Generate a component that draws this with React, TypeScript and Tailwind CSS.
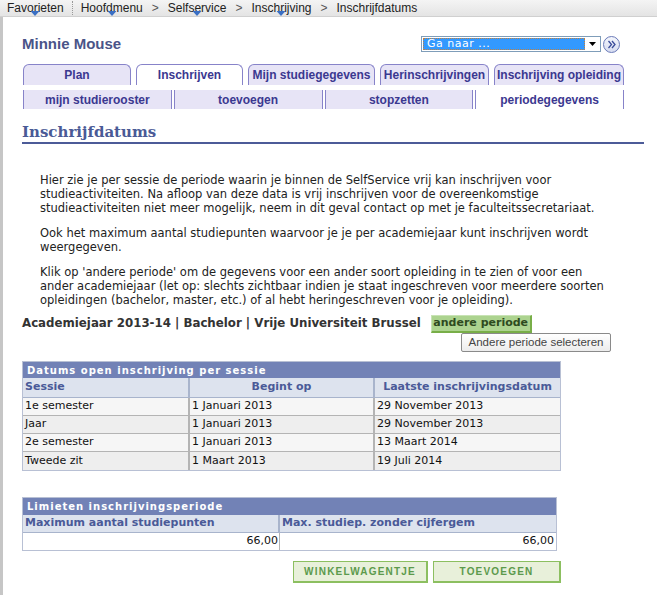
const verdana = { fontFamily: '"DejaVu Sans", Verdana, sans-serif' };
const arial = { fontFamily: '"Liberation Sans", Arial, sans-serif' };

function Caret() {
  return (
    <svg width="9" height="5" viewBox="0 0 9 5" className="absolute left-1/2 -translate-x-1/2 top-[12px]">
      <path d="M0 0h9L4.5 5z" fill="#3a6fc4" />
    </svg>
  );
}

function Crumb({ label, caret }: { label: string; caret?: boolean }) {
  return (
    <span className="relative">
      {label}
      {caret && <Caret />}
    </span>
  );
}

const tabs = [
  { label: "Plan", w: "w-[108px]" },
  { label: "Inschrijven", w: "w-[107px]", active: true },
  { label: "Mijn studiegegevens", w: "w-[127px]" },
  { label: "Herinschrijvingen", w: "w-[109px]" },
  { label: "Inschrijving opleiding", w: "w-[130px]" },
];

const subtabs = [
  { label: "mijn studierooster" },
  { label: "toevoegen" },
  { label: "stopzetten" },
  { label: "periodegegevens", active: true },
];

const rows = [
  ["1e semester", "1 Januari 2013", "29 November 2013"],
  ["Jaar", "1 Januari 2013", "29 November 2013"],
  ["2e semester", "1 Januari 2013", "13 Maart 2014"],
  ["Tweede zit", "1 Maart 2013", "19 Juli 2014"],
];

export default function App() {
  return (
    <div className="w-[657px] h-[595px] bg-white flex flex-col overflow-hidden text-[#222]">
      {/* breadcrumb bar */}
      <div
        className="h-[17px] flex items-center bg-gradient-to-b from-[#f4f4f4] to-[#e4e4e4] border-b border-[#d0d0d0] text-[12px] text-[#222] pl-[7px]"
        style={{ fontFamily: '"Liberation Sans", Tahoma, sans-serif' }}
      >
        <Crumb label="Favorieten" caret />
        <span className="mx-[8px] h-[14px] border-l border-dotted border-[#999]" />
        <Crumb label="Hoofdmenu" caret />
        <span className="mx-[9px] text-[#555]">&gt;</span>
        <Crumb label="Selfservice" caret />
        <span className="mx-[9px] text-[#555]">&gt;</span>
        <Crumb label="Inschrijving" caret />
        <span className="mx-[9px] text-[#555]">&gt;</span>
        <span>Inschrijfdatums</span>
      </div>

      <div className="flex-1 flex">
        <div className="w-[3px] bg-[#c6c6c6]" />
        <div className="flex-1 pl-[19px] pr-[13px]">
          {/* name + goto */}
          <div className="flex items-center h-[18px] mt-[18px]">
            <div className="text-[15px] font-bold text-[#4a5488] flex-1" style={arial}>
              Minnie Mouse
            </div>
            <div className="flex items-center gap-[2px] mr-[24px]">
              <div className="w-[180px] h-[16px] border border-[#7f9db9] bg-white flex items-center p-[1px]">
                <div
                  className="flex-1 h-full bg-[#3399ff] text-white text-[11px] leading-[12px] pl-[3px] flex items-center border border-dotted border-[#c08040] tracking-[0.5px]"
                  style={verdana}
                >
                  Ga naar ...
                </div>
                <div className="w-[14px] flex items-center justify-center">
                  <svg width="7" height="4" viewBox="0 0 7 4">
                    <path d="M0 0h7L3.5 4z" fill="#000" />
                  </svg>
                </div>
              </div>
              <div className="w-[17px] h-[17px] rounded-full border border-[#6a7ab8] bg-gradient-to-b from-[#f4f6fc] to-[#d6dcf0] flex items-center justify-center">
                <svg width="10" height="9" viewBox="0 0 10 9">
                  <path d="M1.5 1l3 3.5-3 3.5M5 1l3 3.5-3 3.5" stroke="#3a4c9a" strokeWidth="1.3" fill="none" />
                </svg>
              </div>
            </div>
          </div>

          {/* tabs */}
          <div className="flex items-end gap-[5px] mt-[11px] ml-[1px]" style={arial}>
            {tabs.map((t) => (
              <div
                key={t.label}
                className={`${t.w} h-[21px] rounded-t-[6px] border border-b-0 border-[#8783c9] flex items-center justify-center text-[12px] font-bold text-[#3b3890] ${
                  t.active ? "bg-white" : "bg-[#e7e4f6] border-b border-b-[#8783c9]"
                }`}
              >
                {t.label}
              </div>
            ))}
          </div>

          {/* subtabs */}
          <div className="flex gap-[2px] mt-[5px] ml-[1px] w-[601px]" style={arial}>
            {subtabs.map((s) => (
              <div
                key={s.label}
                className={`flex-1 h-[19px] border-x border-[#8783c9] flex items-center justify-center text-[12px] font-bold text-[#3b3890] ${
                  s.active ? "bg-white" : "bg-[#e7e4f6]"
                }`}
              >
                {s.label}
              </div>
            ))}
          </div>

          {/* heading */}
          <div
            className="mt-[14px] text-[15px] leading-[18px] font-bold text-[#4a5a96] pb-[1px] border-b-2 border-[#4c5b98]"
            style={{ fontFamily: '"DejaVu Serif", Georgia, serif' }}
          >
            Inschrijfdatums
          </div>

          {/* intro */}
          <div className="pl-[18px] pr-[30px] mt-[29px] text-[11.5px] leading-[14px] flex flex-col gap-[11px]" style={verdana}>
            <p>
              Hier zie je per sessie de periode waarin je binnen de SelfService vrij kan inschrijven voor
              studieactiviteiten. Na afloop van deze data is vrij inschrijven voor de overeenkomstige
              studieactiviteiten niet meer mogelijk, neem in dit geval contact op met je faculteitssecretariaat.
            </p>
            <p>
              Ook het maximum aantal studiepunten waarvoor je je per academiejaar kunt inschrijven wordt
              weergegeven.
            </p>
            <p>
              Klik op 'andere periode' om de gegevens voor een ander soort opleiding in te zien of voor een
              ander academiejaar (let op: slechts zichtbaar indien je staat ingeschreven voor meerdere soorten
              opleidingen (bachelor, master, etc.) of al hebt heringeschreven voor je opleiding).
            </p>
          </div>

          {/* academiejaar */}
          <div className="flex items-center mt-[8px] h-[18px]" style={verdana}>
            <span className="text-[11.8px] font-bold text-[#333]">
              Academiejaar 2013-14 | Bachelor | Vrije Universiteit Brussel
            </span>
            <span className="ml-[10px] h-[18px] w-[101px] bg-[#acd38f] border-r-2 border-b-2 border-[#78ae48] border-l border-t border-l-[#c8e3b4] border-t-[#c8e3b4] flex items-center justify-center text-[11px] font-bold text-[#2e4a1e]">
              andere periode
            </span>
          </div>
          <div className="flex justify-end pr-[33px]">
            <div
              className="w-[150px] h-[19px] rounded-[2px] border border-[#8a8a8a] bg-gradient-to-b from-white to-[#ececec] flex items-center justify-center text-[11.5px] text-[#444]"
              style={{ fontFamily: '"Liberation Sans", Tahoma, sans-serif' }}
            >
              Andere periode selecteren
            </div>
          </div>

          {/* table 1 */}
          <div className="mt-[9px] w-[539px] border border-[#b8c0d4]" style={verdana}>
            <div className="h-[16px] bg-[#7282b6] text-white text-[10px] font-bold tracking-[1px] pl-[4px] flex items-center">
              Datums open inschrijving per sessie
            </div>
            <div className="grid grid-cols-[167px_185px_185px] bg-[#dde3ee] text-[11px] font-bold text-[#4a5a98] h-[20px] border-b border-[#a8b4cc]">
              <div className="flex items-center pl-[2px] border-r-2 border-[#a8b4cc]">Sessie</div>
              <div className="flex items-center justify-center border-r-2 border-[#a8b4cc]">Begint op</div>
              <div className="flex items-center justify-center">Laatste inschrijvingsdatum</div>
            </div>
            {rows.map((r, i) => (
              <div
                key={r[0]}
                className={`grid grid-cols-[167px_185px_185px] h-[18px] text-[11px] text-[#111] ${
                  i % 2 === 0 ? "bg-[#f6f6f6]" : "bg-[#eeeeee]"
                } ${i < rows.length - 1 ? "border-b border-[#b4b4b4]" : ""}`}
              >
                <div className="flex items-center pl-[2px] border-r-2 border-[#b4b4b4]">{r[0]}</div>
                <div className="flex items-center pl-[2px] border-r-2 border-[#b4b4b4]">{r[1]}</div>
                <div className="flex items-center pl-[2px]">{r[2]}</div>
              </div>
            ))}
          </div>

          {/* table 2 */}
          <div className="mt-[26px] w-[535px] border border-[#b8c0d4]" style={verdana}>
            <div className="h-[17px] bg-[#7282b6] text-white text-[10px] font-bold tracking-[1px] pl-[4px] flex items-center">
              Limieten inschrijvingsperiode
            </div>
            <div className="grid grid-cols-[257px_276px] bg-[#dde3ee] text-[11px] font-bold text-[#4a5a98] h-[18px] border-b border-[#a8b4cc]">
              <div className="flex items-center pl-[2px] border-r-2 border-[#a8b4cc]">Maximum aantal studiepunten</div>
              <div className="flex items-center pl-[2px]">Max. studiep. zonder cijfergem</div>
            </div>
            <div className="grid grid-cols-[257px_276px] h-[17px] bg-white text-[11px] text-[#111]">
              <div className="flex items-center justify-end pr-[1px] border-r border-[#b4b4b4]">66,00</div>
              <div className="flex items-center justify-end pr-[2px]">66,00</div>
            </div>
          </div>

          {/* buttons */}
          <div className="flex gap-[5px] mt-[10px] ml-[271px]" style={arial}>
            <div className="w-[135px] h-[22px] bg-[#e8f0da] border border-[#8cbf60] border-r-2 border-b-2 flex items-center justify-center text-[10px] font-bold tracking-[1.2px] text-[#5c9a4c]">
              WINKELWAGENTJE
            </div>
            <div className="w-[128px] h-[22px] bg-[#e8f0da] border border-[#8cbf60] border-r-2 border-b-2 flex items-center justify-center text-[10px] font-bold tracking-[1.2px] text-[#5c9a4c]">
              TOEVOEGEN
            </div>
          </div>
        </div>
      </div>
    </div>
  );
}
